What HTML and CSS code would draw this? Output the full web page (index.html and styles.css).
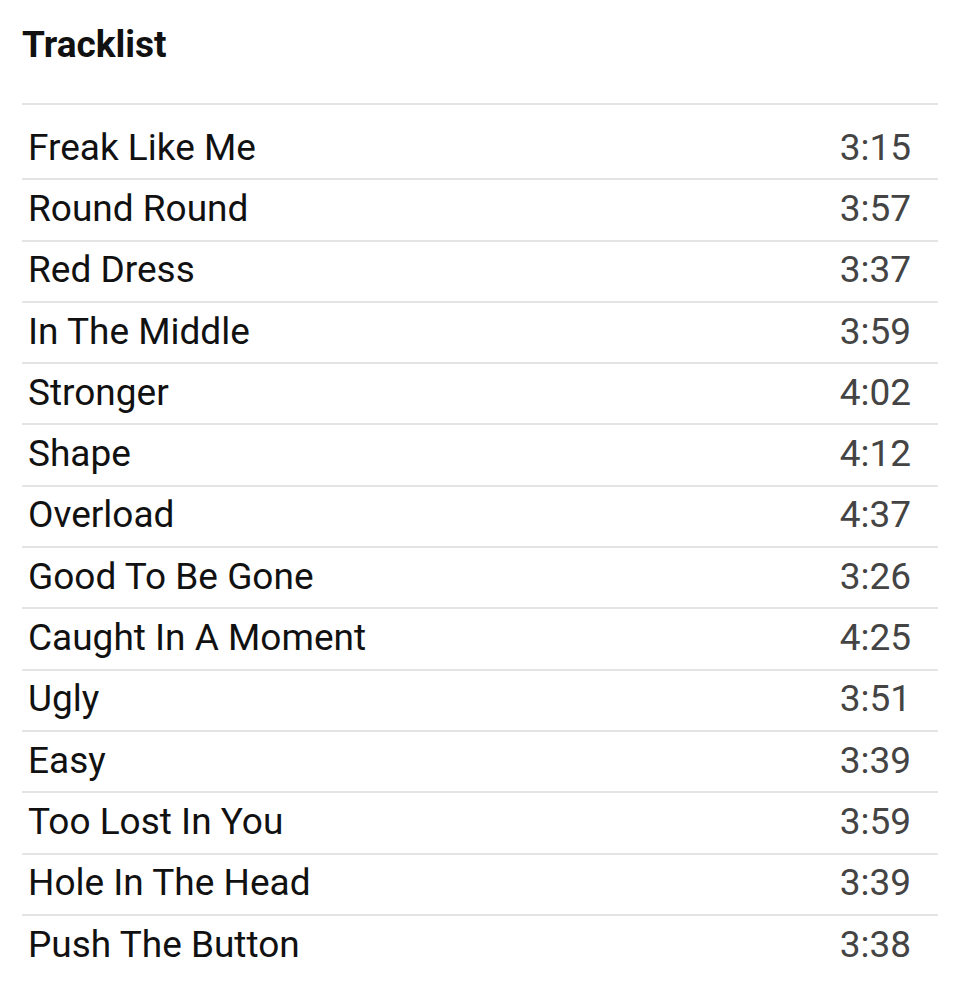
FILE: index.html
```html
<!DOCTYPE html>
<html lang="en">
<head>
    <meta charset="UTF-8">
    <meta name="viewport" content="width=device-width, initial-scale=1.0">
    <title>Tracklist</title>
    <link rel="stylesheet" href="styles.css">
</head>
<body>
    <main class="tracklist">
        <h1>Tracklist</h1>
        <ul class="tracks">
            <li><span class="name">Freak Like Me</span><span class="time">3:15</span></li>
            <li><span class="name">Round Round</span><span class="time">3:57</span></li>
            <li><span class="name">Red Dress</span><span class="time">3:37</span></li>
            <li><span class="name">In The Middle</span><span class="time">3:59</span></li>
            <li><span class="name">Stronger</span><span class="time">4:02</span></li>
            <li><span class="name">Shape</span><span class="time">4:12</span></li>
            <li><span class="name">Overload</span><span class="time">4:37</span></li>
            <li><span class="name">Good To Be Gone</span><span class="time">3:26</span></li>
            <li><span class="name">Caught In A Moment</span><span class="time">4:25</span></li>
            <li><span class="name">Ugly</span><span class="time">3:51</span></li>
            <li><span class="name">Easy</span><span class="time">3:39</span></li>
            <li><span class="name">Too Lost In You</span><span class="time">3:59</span></li>
            <li><span class="name">Hole In The Head</span><span class="time">3:39</span></li>
            <li><span class="name">Push The Button</span><span class="time">3:38</span></li>
        </ul>
    </main>
</body>
</html>
```

FILE: styles.css
```css
body {
    margin: 0;
    background: #fff;
    color: #111;
    font-family: Roboto, "Liberation Sans", Arial, sans-serif;
}
.tracklist {
    padding: 23px 22px 0 22px;
}
h1 {
    font-size: 37px;
    font-weight: 700;
    line-height: 44px;
    margin: 0 0 36px 0;
    color: #111;
}
.tracks {
    list-style: none;
    margin: 0;
    padding: 14px 0 0 0;
    border-top: 2px solid #e4e4e4;
}
.tracks li {
    display: flex;
    justify-content: space-between;
    align-items: center;
    height: 59.3px;
    padding: 0 27px 0 6px;
    font-size: 37px;
    line-height: 44px;
    border-bottom: 2px solid #e4e4e4;
}
.tracks li span {
    padding-bottom: 2px;
}
.tracks li:last-child {
    border-bottom: none;
}
.time {
    color: #444;
}
```
